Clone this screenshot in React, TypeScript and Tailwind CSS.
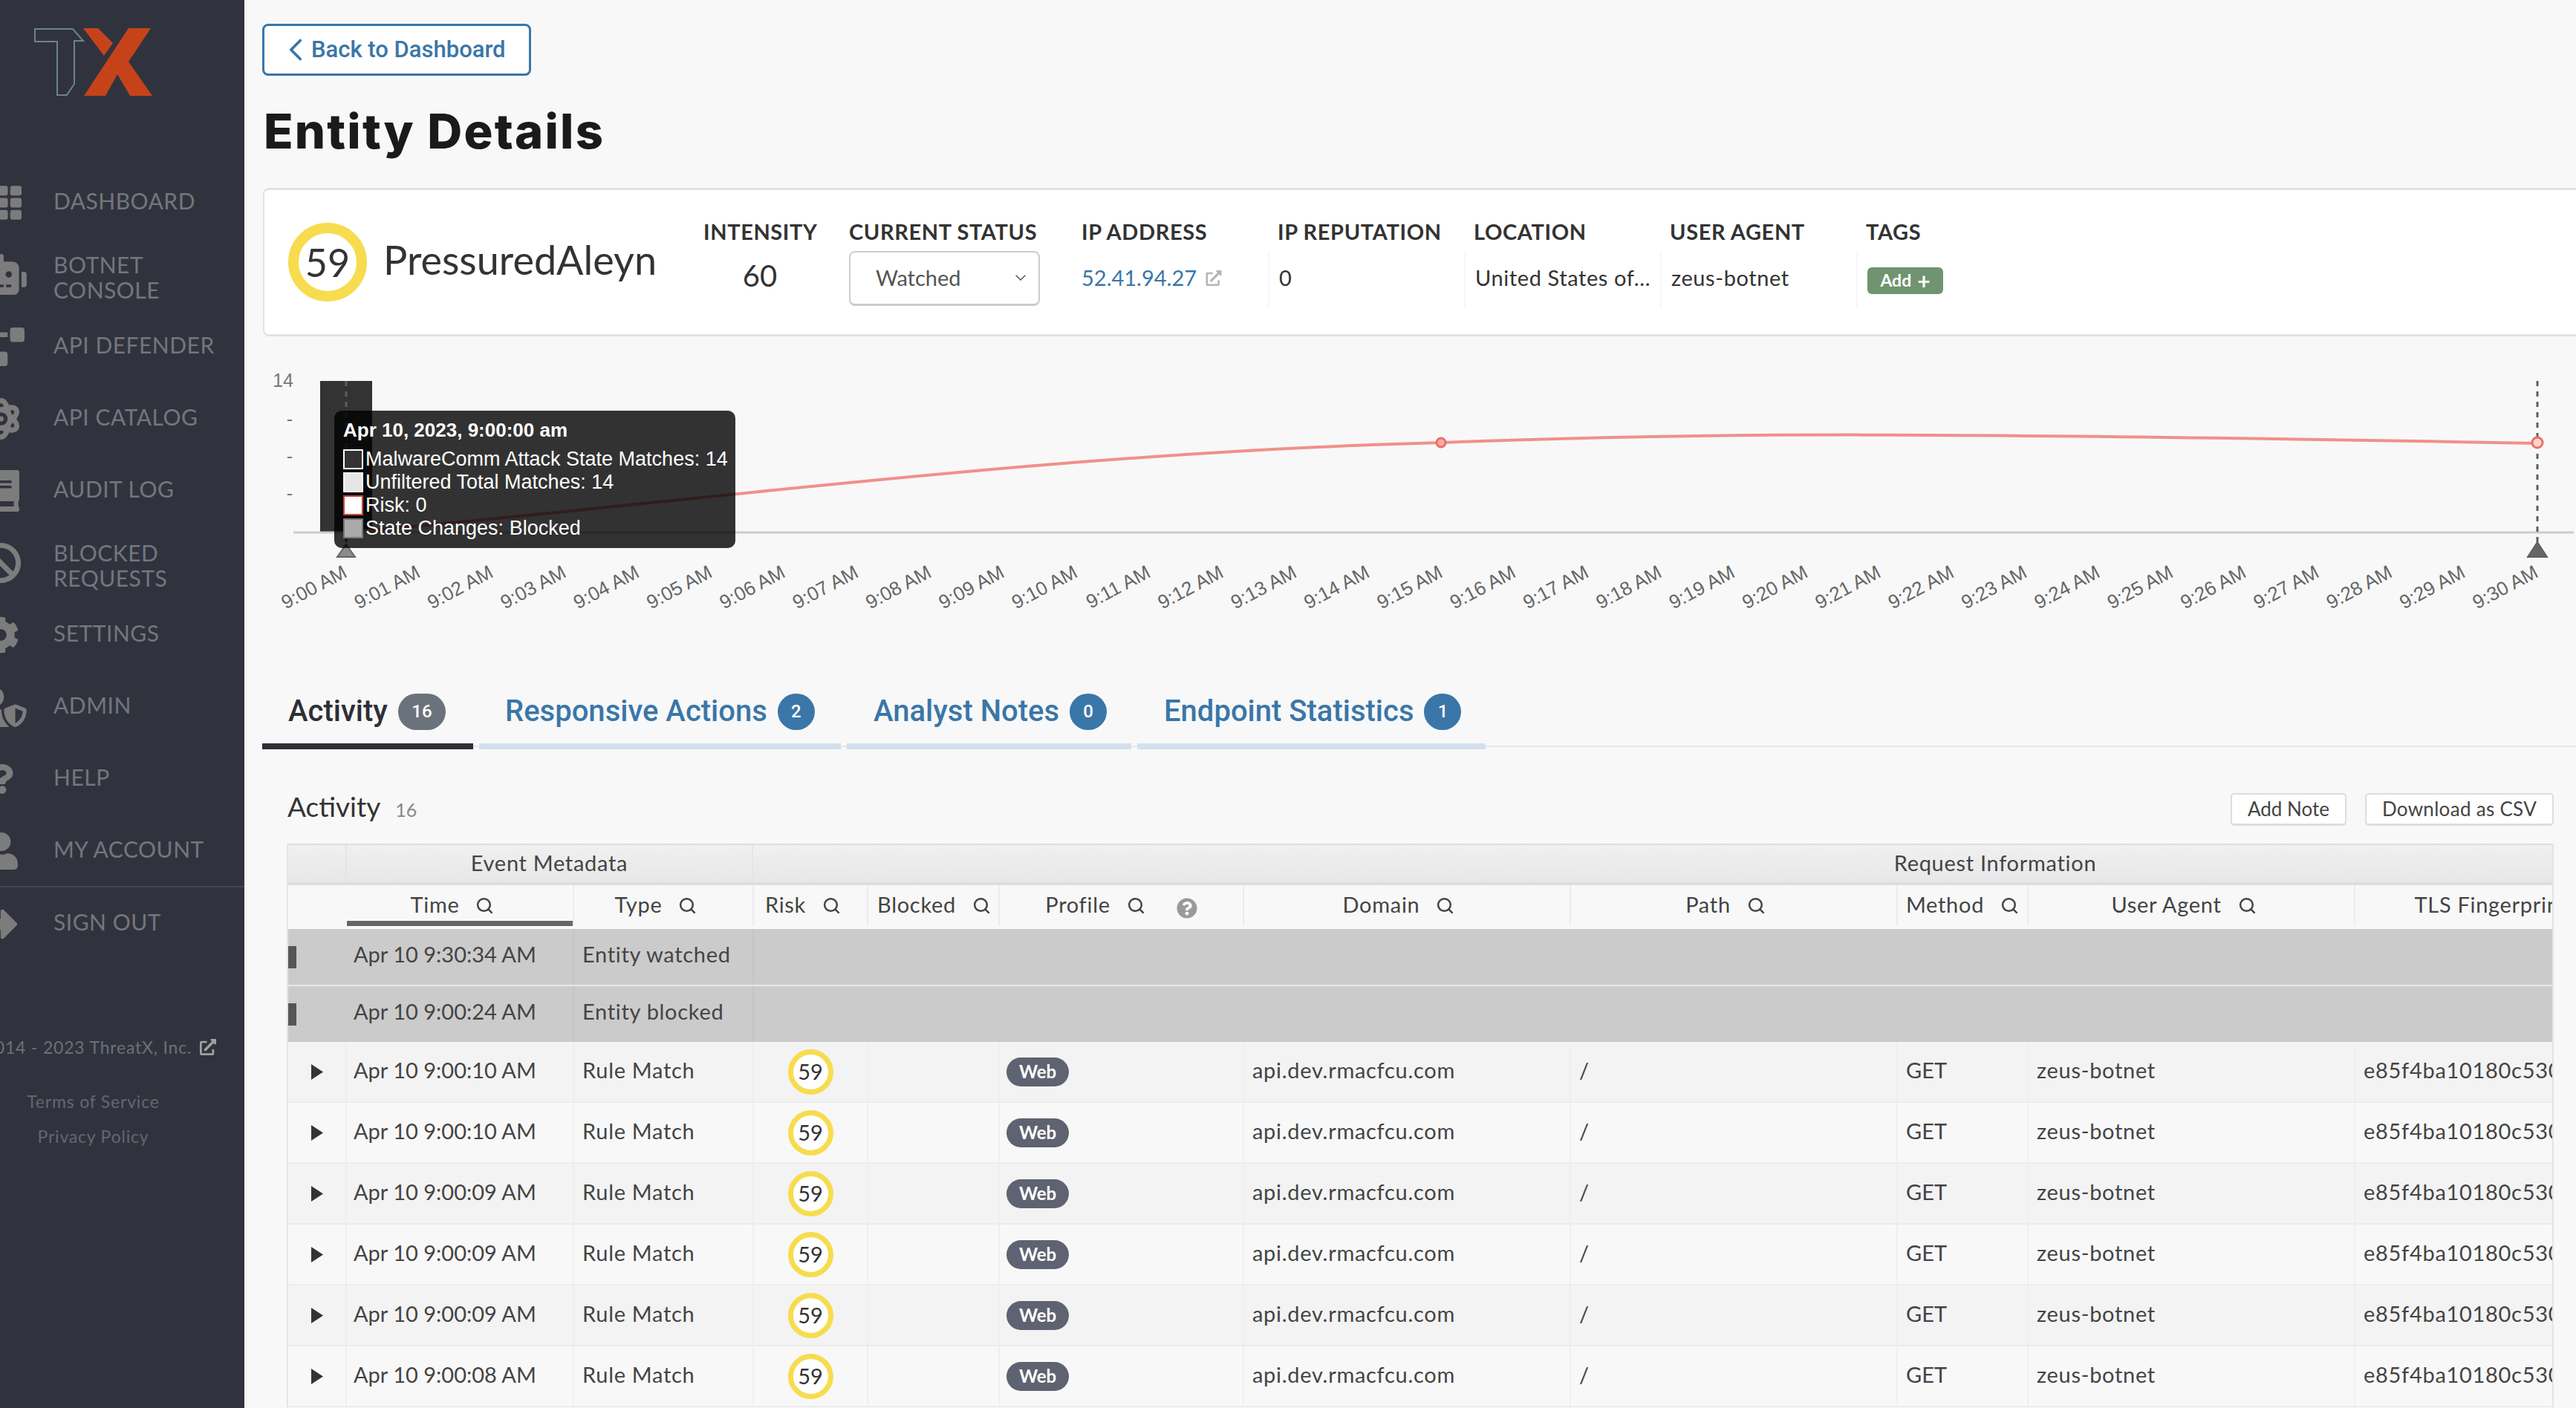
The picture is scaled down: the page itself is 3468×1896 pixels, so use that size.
import React from "react";
import { Search, ChevronLeft, ChevronDown } from "lucide-react";
import {
  FaTh, FaRobot, FaProjectDiagram, FaAtom, FaBook, FaBan, FaCog, FaUserShield,
  FaQuestion, FaUser, FaSignOutAlt, FaExternalLinkAlt, FaQuestionCircle,
} from "react-icons/fa";

const iconColor = "text-[#7c7c7c]";
const nav = [
  { label: ["DASHBOARD"], icon: <FaTh className="shrink-0 h-[52px] w-[52px] mr-[43px]" /> },
  { label: ["BOTNET", "CONSOLE"], icon: <FaRobot className="shrink-0 h-[55px] w-[69px] mr-[36px]" /> },
  { label: ["API DEFENDER"], icon: <FaProjectDiagram className="shrink-0 h-[52px] w-[65px] mr-[39px]" /> },
  { label: ["API CATALOG"], icon: <FaAtom className="shrink-0 h-[56px] w-[49px] mr-[46px]" /> },
  { label: ["AUDIT LOG"], icon: <FaBook className="shrink-0 h-[56px] w-[49px] mr-[46px]" /> },
  { label: ["BLOCKED", "REQUESTS"], icon: <FaBan className="shrink-0 h-[56px] w-[56px] mr-[43px]" /> },
  { label: ["SETTINGS"], icon: <FaCog className="shrink-0 h-[50px] w-[50px] mr-[46px]" /> },
  { label: ["ADMIN"], icon: <FaUserShield className="shrink-0 h-[54px] w-[68px] mr-[36px]" /> },
  { label: ["HELP"], icon: <FaQuestion className="shrink-0 h-[40px] w-[30px] mr-[54px]" /> },
  { label: ["MY ACCOUNT"], icon: <FaUser className="shrink-0 h-[50px] w-[44px] mr-[48px]" /> },
];

function NavItem({ label, icon, h = "h-[97px]" }: { label: string[]; icon: React.ReactNode; h?: string }) {
  return (
    <div className={`flex items-center ${h}`}>
      <div className={`w-[72px] shrink-0 flex justify-end mt-[6px] ${iconColor}`}>{icon}</div>
      <div className={`text-[30px] leading-[34px] tracking-[0.5px] text-[#74767b] ${label.length > 1 ? "mt-[12px]" : ""}`}>
        {label.map((l) => (
          <div key={l}>{l}</div>
        ))}
      </div>
    </div>
  );
}

function Sidebar() {
  return (
    <aside className="w-[329px] shrink-0 h-full bg-[#30333e] overflow-hidden font-[Lato,sans-serif]">
      <svg viewBox="0 0 329 221" className="block w-[329px] h-[221px]">
        <path d="M47 39H98L112 55H100V113L90 128H77V56H47Z" fill="none" stroke="#6b838c" strokeWidth="2" />
        <path d="M112 38H132L152 58L140 75Z" fill="#c6431a" />
        <path d="M173 38H203L173 83L205 129H175L158 100L142 129H113Z" fill="#c6431a" />
      </svg>
      {nav.map((n) => (
        <NavItem key={n.label[0]} label={n.label} icon={n.icon} />
      ))}
      <div className="h-[2px] mt-[2px] bg-[#444752]" />
      <NavItem label={["SIGN OUT"]} icon={<FaSignOutAlt className="shrink-0 h-[53px] w-[53px] mr-[48px]" />} h="h-[92px]" />
      <div className="mt-[106px] flex items-center gap-[11px] whitespace-nowrap -ml-[48px] text-[23px] text-[#6e7075] tracking-[0.8px]">
        <span>© 2014 - 2023 ThreatX, Inc.</span>
        <FaExternalLinkAlt className="h-[22px] w-[22px] text-[#a0a0a0]" />
      </div>
      <div className="mt-[32px] w-[251px] text-center text-[23px] tracking-[0.8px] text-[#65676e] leading-[47px]">
        <div>Terms of Service</div>
        <div>Privacy Policy</div>
      </div>
    </aside>
  );
}

function Ring({ big }: { big?: boolean }) {
  return big ? (
    <div className="w-[106px] h-[106px] rounded-full border-[14px] border-[#f7dc4f] bg-white flex items-center justify-center text-[52px] text-[#333] shrink-0">59</div>
  ) : (
    <div className="w-[61px] h-[61px] rounded-full border-[7px] border-[#f7dc4f] bg-white flex items-center justify-center text-[29px] text-[#333]">59</div>
  );
}

function Info({ title, w, children, first }: { title: string; w: string; children: React.ReactNode; first?: boolean }) {
  return (
    <div className={`${w} shrink-0`}>
      <div className="h-[44px] text-[29px] font-bold leading-[36px] tracking-[0.6px] text-[#333] whitespace-nowrap">{title}</div>
      <div className={`h-[77px] pb-[5px] flex items-center text-[29px] text-[#333] whitespace-nowrap ${first ? "" : "-ml-[13px] pl-[13px] border-l-2 border-[#f7f7f7]"}`}>
        {children}
      </div>
    </div>
  );
}

function EntityCard() {
  return (
    <section className="ml-[25px] mt-[36px] h-[200px] w-[3160px] bg-white rounded-[8px] border-2 border-t-[3px] border-b-[3px] border-[#e2e2e2] flex">
      <div className="w-[591px] shrink-0 flex items-center pl-[32px] gap-[22px]">
        <Ring big />
        <span className="text-[54px] text-[#333] pb-[7px]">PressuredAleyn</span>
      </div>
      <div className="flex pt-[38px]">
        <div className="w-[196px] shrink-0">
          <div className="h-[44px] text-[29px] font-bold leading-[36px] tracking-[0.6px] text-[#333]">INTENSITY</div>
          <div className="w-[152px] text-center text-[40px] leading-[66px] text-[#333]">60</div>
        </div>
        <div className="w-[313px] shrink-0">
          <div className="h-[44px] text-[29px] font-bold leading-[36px] tracking-[0.6px] text-[#333] whitespace-nowrap">CURRENT STATUS</div>
          <div className="w-[257px] h-[74px] rounded-[8px] border-2 border-b-[3px] border-[#cccccc] flex items-center justify-between pl-[34px] pr-[12px] pb-[2px] text-[29px] text-[#555] bg-white">
            Watched
            <ChevronDown className="w-[24px] h-[24px] text-[#555]" strokeWidth={1.5} />
          </div>
        </div>
        <Info title="IP ADDRESS" w="w-[264px]" first>
          <span className="text-[#3a76a8]">52.41.94.27</span>
          <FaExternalLinkAlt className="ml-[12px] w-[22px] h-[21px] text-[#b5b5b5]" />
        </Info>
        <Info title="IP REPUTATION" w="w-[264px]">0</Info>
        <Info title="LOCATION" w="w-[264px]"><span className="tracking-[0.6px]">United States of...</span></Info>
        <Info title="USER AGENT" w="w-[264px]"><span className="tracking-[0.6px]">zeus-botnet</span></Info>
        <Info title="TAGS" w="w-[264px]">
          <span className="w-[102px] h-[36px] rounded-[6px] bg-[#6f946f] text-white text-[23px] font-bold flex items-center justify-center gap-[8px] mt-[7px]">
            Add <span className="text-[30px] leading-none font-bold">+</span>
          </span>
        </Info>
      </div>
    </section>
  );
}

const labels = Array.from({ length: 31 }, (_, i) => `9:${String(i).padStart(2, "0")} AM`);
const tickX = (i: number) => 466 + (2950 * i) / 30;

function Chart() {
  return (
    <div className="relative mt-[7px] w-[3139px] h-[440px]">
      <svg viewBox="329 460 3139 440" className="block w-[3139px] h-[440px] font-['Liberation_Sans',sans-serif]">
        <text x="395" y="521" textAnchor="end" fontSize="25" fill="#777">14</text>
        <text x="390" y="573" textAnchor="middle" fontSize="25" fill="#777">-</text>
        <text x="390" y="623" textAnchor="middle" fontSize="25" fill="#777">-</text>
        <text x="390" y="673" textAnchor="middle" fontSize="25" fill="#777">-</text>
        <rect x="431" y="513" width="70" height="204" fill="#333333" />
        <line x1="395" y1="717" x2="3465" y2="717" stroke="#cccccc" strokeWidth="3" />
        <path d="M466 717C900 680 1400 610 1940 596C2300 582 2600 582 3416 597" fill="none" stroke="#f0908a" strokeWidth="4" />
        <circle cx="1940" cy="596" r="6" fill="#f7b0aa" stroke="#ec6f68" strokeWidth="3" />
        <line x1="466" y1="513" x2="466" y2="732" stroke="#5f5f5f" strokeWidth="3" strokeDasharray="7 7" />
        <path d="M466 733L478 750H454Z" fill="#8c8c8c" stroke="#666" strokeWidth="2" />
        <line x1="3416" y1="513" x2="3416" y2="732" stroke="#5f5f5f" strokeWidth="3" strokeDasharray="7 7" />
        <circle cx="3416" cy="596" r="7" fill="#fbd5d1" stroke="#ec6f68" strokeWidth="3" />
        <path d="M3416 730L3429 750H3403Z" fill="#666666" stroke="#5f5f5f" strokeWidth="2" />
        {labels.map((l, i) => (
          <text key={l} x={tickX(i) + 3} y={776} textAnchor="end" fontSize="26" fill="#666" transform={`rotate(-28 ${tickX(i) + 3} 776)`}>
            {l}
          </text>
        ))}
      </svg>
      <div className="absolute left-[121px] top-[93px] w-[540px] h-[185px] rounded-[10px] bg-black/80 text-white font-['Liberation_Sans',sans-serif] pl-[12px] pt-[10px] text-[27px] leading-[31px]">
        <div className="font-bold text-[26px] mb-[8px] leading-[32px]">Apr 10, 2023, 9:00:00 am</div>
        {[
          ["border-white bg-[#333333]", "MalwareComm Attack State Matches: 14"],
          ["border-[#f4f4f4] bg-[#e6e6e6]", "Unfiltered Total Matches: 14"],
          ["border-[#c9453e] bg-white", "Risk: 0"],
          ["border-[#777777] bg-[#aaaaaa]", "State Changes: Blocked"],
        ].map(([c, t]) => (
          <div key={t} className="flex items-center h-[31px] whitespace-nowrap">
            <span className={`w-[27px] h-[27px] border-2 mr-[3px] shrink-0 ${c}`} />
            {t}
          </div>
        ))}
      </div>
    </div>
  );
}

function Badge({ n, gray }: { n: number; gray?: boolean }) {
  return (
    <span className={`h-[49px] rounded-full flex items-center justify-center text-[24px] font-medium text-white ${gray ? "w-[64px] bg-[#6c727b]" : "w-[50px] bg-[#3a76a8]"}`}>
      {n}
    </span>
  );
}

function Tabs() {
  const tabs = [
    { t: "Responsive Actions", n: 2, w: "w-[487px] pl-[35px]" },
    { t: "Analyst Notes", n: 0, w: "w-[383px] pl-[36px]" },
    { t: "Endpoint Statistics", n: 1, w: "w-[469px] pl-[36px]" },
  ];
  return (
    <div className="ml-[24px] mt-[25px] flex h-[84px] font-[Roboto,sans-serif] text-[40px] font-medium">
      <div className="w-[284px] pl-[35px] pb-[10px] flex items-center gap-[14px] border-b-[8px] border-[#2d2f36] text-[#2d2f36] whitespace-nowrap">
        Activity <Badge n={16} gray />
      </div>
      {tabs.map((x) => (
        <React.Fragment key={x.t}>
          <div className="w-[8px] self-end h-[2px] mb-[3px] bg-[#e6e6e6]" />
          <div className={`${x.w} pb-[10px] flex items-center gap-[14px] border-b-[8px] border-[#d3e1ec] text-[#3a76a8] whitespace-nowrap`}>
            {x.t} <Badge n={x.n} />
          </div>
        </React.Fragment>
      ))}
      <div className="flex-1 self-end h-[2px] mb-[3px] bg-[#e6e6e6]" />
    </div>
  );
}

const gridCols = "grid grid-cols-[79px_306px_242px_154px_177px_329px_440px_440px_176px_440px_440px] w-[3663px]";
const headers: { t: string; c: string; help?: boolean; sorted?: boolean }[] = [
  { t: "Time", c: "pr-[20px]", sorted: true },
  { t: "Type", c: "pr-[20px]" },
  { t: "Risk", c: "pr-[20px]" },
  { t: "Blocked", c: "pl-[2px]" },
  { t: "Profile", c: "", help: true },
  { t: "Domain", c: "pr-[22px]" },
  { t: "Path", c: "pr-[22px]" },
  { t: "Method", c: "" },
  { t: "User Agent", c: "pr-[20px]" },
  { t: "TLS Fingerprint", c: "pr-[26px]" },
];

const rules = ["Apr 10 9:00:10 AM", "Apr 10 9:00:10 AM", "Apr 10 9:00:09 AM", "Apr 10 9:00:09 AM", "Apr 10 9:00:09 AM", "Apr 10 9:00:08 AM"];
const cell = "flex items-center pl-[11px] pb-[4px] whitespace-nowrap overflow-hidden border-r-2";
const timeCell = "flex items-center pl-[9px] pb-[4px] whitespace-nowrap overflow-hidden border-r-2";
const grayTime = "flex items-center pl-[9px] pb-[7px] whitespace-nowrap overflow-hidden border-r-2";
const grayCell = "flex items-center pl-[11px] pb-[7px] whitespace-nowrap overflow-hidden border-r-2";
const spaced = "tracking-[0.7px]";

function Table() {
  return (
    <div className="ml-[57px] mt-[24px] w-[3052px] overflow-hidden border-x-2 border-[#e4e4e4] text-[29px] text-[#444]">
      <div className="grid grid-cols-[77px_549px_3344px] h-[56px] border-t-2 border-b-4 border-[#dddddd] bg-linear-to-b from-[#f0f0f0] to-[#e7e7e7]">
        <div />
        <div className={`flex items-center justify-center pb-[3px] border-x-2 border-[#e5e5e5] ${spaced}`}>Event Metadata</div>
        <div className={`flex items-center justify-center pb-[3px] ${spaced}`}>Request Information</div>
      </div>
      <div className={`${gridCols} h-[59px] bg-[#f8f8f8]`}>
        <div />
        {headers.map((h) => (
          <div
            key={h.t}
            className={`h-[55px] flex items-center justify-center gap-[22px] border-r-2 border-[#ececec] whitespace-nowrap ${spaced} ${h.c} ${h.sorted ? "shadow-[inset_0_-7px_0_#666666]" : ""}`}
          >
            <span className="pb-[3px]">{h.t}</span>
            <Search className="w-[25px] h-[25px] text-[#444] shrink-0" strokeWidth={2.4} />
            {h.help && <FaQuestionCircle className="ml-[20px] mt-[6px] w-[28px] h-[28px] text-[#9a9a9a] shrink-0" />}
          </div>
        ))}
      </div>
      {[
        ["Apr 10 9:30:34 AM", "Entity watched", "h-[77px] border-b-2 border-[#e8e8e8]"],
        ["Apr 10 9:00:24 AM", "Entity blocked", "h-[75px]"],
      ].map(([a, b, c]) => (
        <div key={a} className={`${gridCols} bg-[#cbcbcb] ${c}`}>
          <div className="flex items-center"><span className="w-[11px] h-[30px] bg-[#555555]" /></div>
          <div className={`${grayTime} border-[#c6c6c6]`}>{a}</div>
          <div className={`${grayCell} border-[#c4c4c4] ${spaced}`}>{b}</div>
        </div>
      ))}
      {rules.map((t, i) => (
        <div key={i} className={`${gridCols} h-[82px] border-b-2 border-[#ececec] ${i % 2 === 0 ? "bg-[#f3f3f3]" : "bg-[#f8f8f8]"}`}>
          <div className="flex items-center pl-[31px] border-r-2 border-[#efefef]">
            <svg viewBox="0 0 16 21" className="w-[16px] h-[21px] text-[#333]"><path d="M0 0L16 10.5L0 21Z" fill="currentColor" /></svg>
          </div>
          <div className={`${timeCell} border-[#efefef]`}>{t}</div>
          <div className={`${cell} border-[#efefef] ${spaced}`}>Rule Match</div>
          <div className="flex items-center justify-center border-r-2 border-[#efefef]"><Ring /></div>
          <div className="border-r-2 border-[#efefef]" />
          <div className="flex items-center pl-[9px] border-r-2 border-[#efefef]">
            <span className="w-[84px] h-[39px] rounded-full bg-[#5f6270] text-white text-[24px] font-bold flex items-center justify-center">Web</span>
          </div>
          <div className={`${cell} border-[#efefef] ${spaced}`}>api.dev.rmacfcu.com</div>
          <div className={`${cell} border-[#efefef]`}>/</div>
          <div className={`${cell} border-[#efefef]`}>GET</div>
          <div className={`${cell} border-[#efefef] ${spaced}`}>zeus-botnet</div>
          <div className={`${cell} border-[#efefef] ${spaced}`}>e85f4ba10180c530f4b8a7d91c</div>
        </div>
      ))}
    </div>
  );
}

export default function App() {
  return (
    <div className="flex w-[3468px] h-[1896px] overflow-hidden bg-[#f8f8f8] font-[Lato,sans-serif]">
      <Sidebar />
      <main className="flex-1 min-w-0 h-full overflow-hidden">
        <button className="ml-[24px] mt-[32px] w-[362px] h-[70px] bg-white border-[3px] border-[#3a76a8] rounded-[8px] flex items-center pl-[17px] text-[31px] font-medium text-[#3a76a8] font-[Roboto,sans-serif]">
          <ChevronLeft className="w-[50px] h-[50px] -mr-[4px] shrink-0" strokeWidth={1.8} />
          Back to Dashboard
        </button>
        <h1 className="ml-[26px] mt-[35px] h-[80px] leading-[80px] text-[65px] tracking-[2.2px] font-extrabold text-[#1a1a1a] font-[Inter,sans-serif]">Entity Details</h1>
        <EntityCard />
        <Chart />
        <Tabs />
        <div className="ml-[58px] mt-[59px] w-[3051px] h-[44px] flex items-center justify-between">
          <div className="flex items-baseline gap-[20px] pb-[8px]">
            <span className="text-[37px] text-[#333]">Activity</span>
            <span className="text-[25px] text-[#888]">16</span>
          </div>
          <div className="flex gap-[25px]">
            <button className="w-[156px] h-[44px] pb-[5px] bg-white border-2 border-b-[3px] border-[#dddddd] rounded-[5px] text-[26px] text-[#444]">Add Note</button>
            <button className="w-[254px] h-[44px] pb-[5px] bg-white border-2 border-b-[3px] border-[#dddddd] rounded-[5px] text-[26px] tracking-[0.3px] text-[#444]">Download as CSV</button>
          </div>
        </div>
        <Table />
      </main>
    </div>
  );
}
